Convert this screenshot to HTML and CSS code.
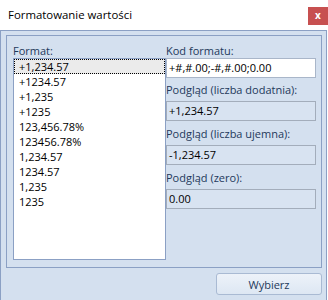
FILE: index.html
```html
<!DOCTYPE html>
<html lang="pl">
<head>
<meta charset="utf-8">
<link rel="stylesheet" href="styles.css">
</head>
<body>
<div class="window">
  <div class="titlebar">
    <span class="title">Formatowanie wartości</span>
    <span class="close">x</span>
  </div>
  <div class="frame">
    <div class="panel">
      <div class="col-left">
        <div class="label first">Format:</div>
        <ul class="list">
          <li class="item selected">+1,234.57</li>
          <li class="item">+1234.57</li>
          <li class="item">+1,235</li>
          <li class="item">+1235</li>
          <li class="item">123,456.78%</li>
          <li class="item">123456.78%</li>
          <li class="item">1,234.57</li>
          <li class="item">1234.57</li>
          <li class="item">1,235</li>
          <li class="item">1235</li>
        </ul>
      </div>
      <div class="col-right">
        <div class="label first">Kod formatu:</div>
        <div class="field input">+#,#.00;-#,#.00;0.00</div>
        <div class="label second">Podgląd (liczba dodatnia):</div>
        <div class="field preview">+1,234.57</div>
        <div class="label">Podgląd (liczba ujemna):</div>
        <div class="field preview">-1,234.57</div>
        <div class="label">Podgląd (zero):</div>
        <div class="field preview">0.00</div>
      </div>
    </div>
    <div class="buttons">
      <button class="btn">Wybierz</button>
    </div>
  </div>
</div>
</body>
</html>
```
FILE: styles.css
```css
* { box-sizing: border-box; }
body {
  margin: 0;
  width: 328px;
  height: 300px;
  overflow: hidden;
  background: #ffffff;
  font-family: "Open Sans", "Noto Sans", sans-serif;
  font-size: 11px;
  color: #000;
}
.window { width: 328px; }
.titlebar {
  height: 30px;
  display: flex;
  align-items: flex-start;
  background: #ffffff;
}
.title {
  padding-left: 8px;
  line-height: 30px;
  font-size: 11.4px;
  color: #000;
}
.close {
  margin-left: auto;
  margin-top: 7px;
  width: 20px;
  height: 18px;
  background: #c75050;
  color: #fff;
  font-weight: bold;
  font-size: 10px;
  line-height: 17px;
  text-align: center;
}
.frame {
  width: 327px;
  height: 270px;
  border: 1px solid #8ba0c4;
  border-bottom: none;
  background: #d4e0ef;
  padding: 4px 4px 0 5px;
}
.panel {
  height: 233px;
  border: 1px solid #8ba0c4;
  display: flex;
  padding: 7px 5px 7px 6px;
}
.col-left { width: 153px; display: flex; flex-direction: column; }
.col-right { width: 150px; display: flex; flex-direction: column; }
.label {
  color: #1e395b;
  line-height: 16px;
  padding-top: 5px;
  padding-bottom: 3px;
  white-space: nowrap;
}
.label.second { padding-top: 4px; }
.label.first { line-height: 15px; padding-top: 0; padding-bottom: 0; }
.list {
  margin: 0;
  padding: 0;
  list-style: none;
  height: 202px;
  background: #fff;
  border: 1px solid #8ba0c4;
}
.item {
  height: 15px;
  line-height: 15px;
  padding-left: 5px;
  white-space: nowrap;
}
.item.selected {
  background: #ebebeb;
  outline: 1px dotted #000;
  outline-offset: -1px;
}
.field {
  height: 20px;
  line-height: 18px;
  padding-left: 2px;
  white-space: nowrap;
}
.input {
  background: #ffffff;
  border: 1px solid #a9b6c9;
}
.preview {
  background: #d8e3f1;
  border: 1px solid #a3adbb;
}
.buttons {
  display: flex;
  justify-content: flex-end;
  margin-top: 5px;
}
.btn {
  width: 106px;
  height: 22px;
  border: 1px solid #a9bad3;
  border-radius: 3px;
  background: linear-gradient(#edf2f9, #dde7f3);
  color: #1e395b;
  font-family: "Open Sans", "Noto Sans", sans-serif;
  font-size: 11px;
  padding: 0;
}
```
